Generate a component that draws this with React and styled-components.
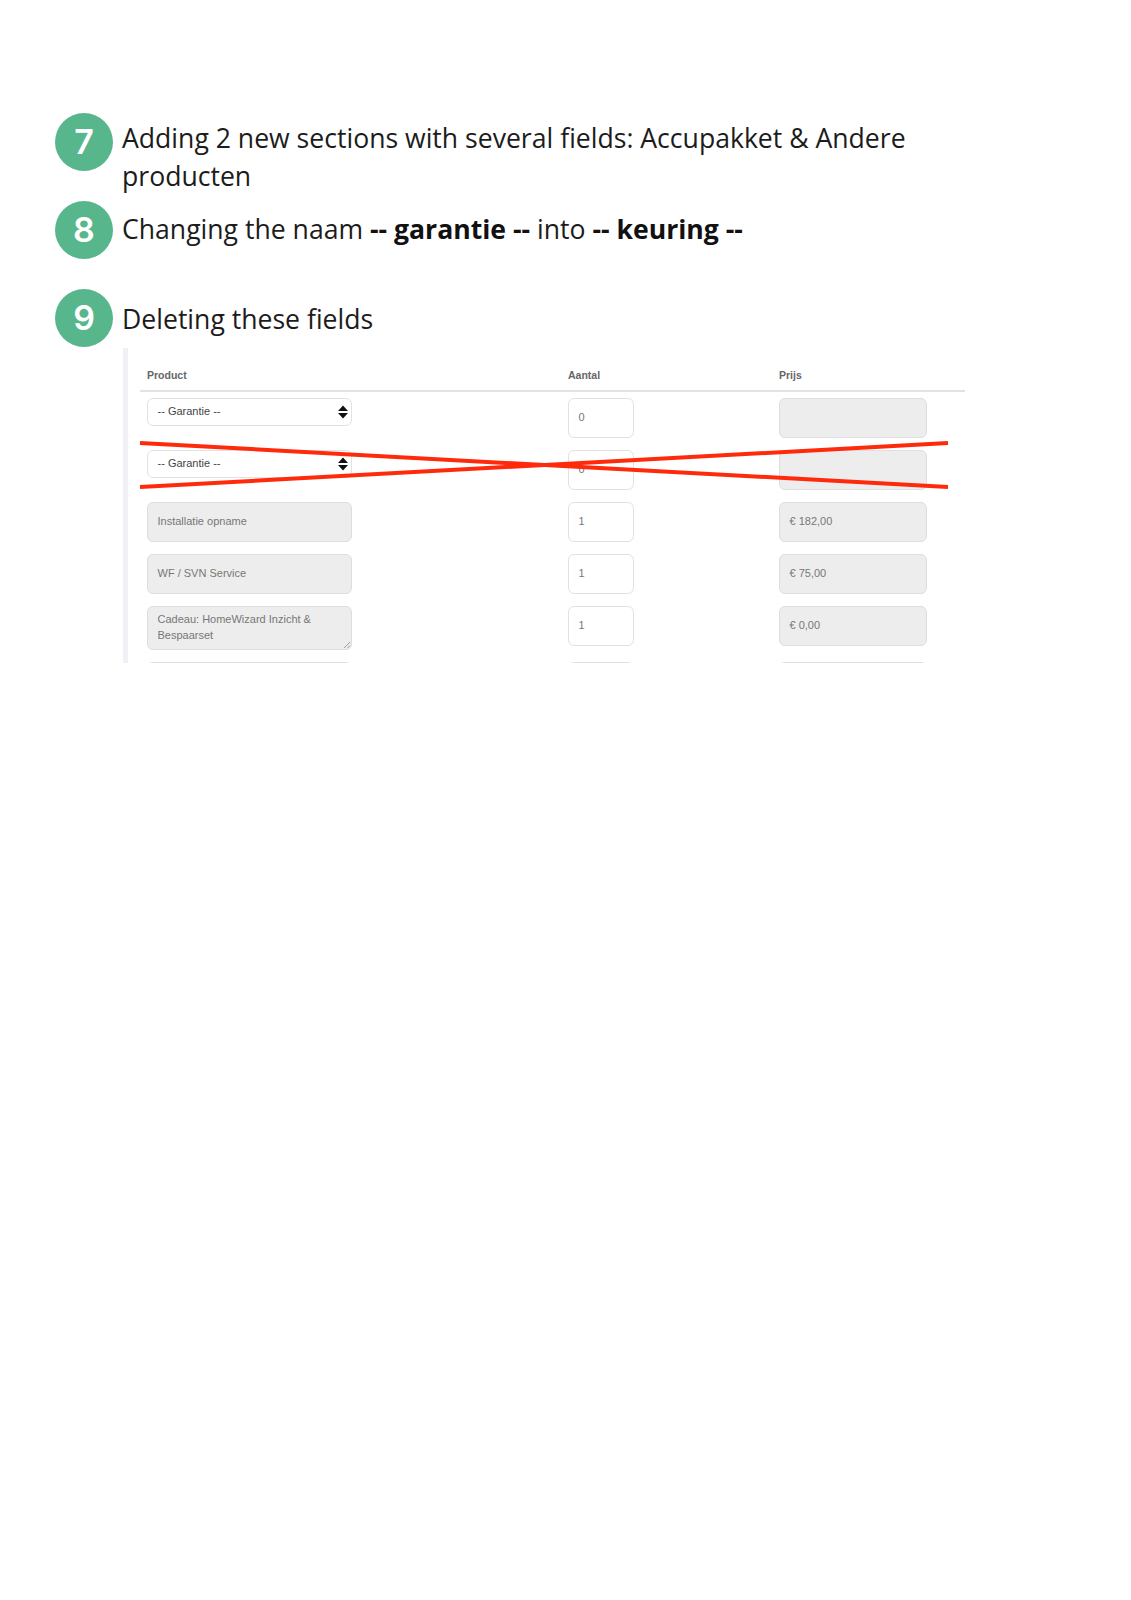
import React from 'react'
import styled, { createGlobalStyle } from 'styled-components'

const rows = [
    { type: 'select', name: '-- Garantie --', amount: '0', price: '' },
    { type: 'select', name: '-- Garantie --', amount: '0', price: '' },
    { type: 'field', name: 'Installatie opname', amount: '1', price: '€ 182,00' },
    { type: 'field', name: 'WF / SVN Service', amount: '1', price: '€ 75,00' },
    { type: 'area', name: 'Cadeau: HomeWizard Inzicht & Bespaarset', amount: '1', price: '€ 0,00' },
    { type: 'field', name: '', amount: '', price: '' },
]

export default function App() {
    return (
        <Page>
            <GlobalStyle />
            <Step $after={6}>
                <Badge>7</Badge>
                <StepText $offset={6}>Adding 2 new sections with several fields: Accupakket &amp; Andere producten</StepText>
            </Step>
            <Step $after={30}>
                <Badge>8</Badge>
                <StepText $offset={9}>
                    Changing the naam <b>-- garantie --</b> into <b>-- keuring --</b>
                </StepText>
            </Step>
            <Step $after={1}>
                <Badge>9</Badge>
                <StepText $offset={11}>Deleting these fields</StepText>
            </Step>
            <Shot>
                <HeadRow>
                    <HeadCell>Product</HeadCell>
                    <HeadCell>Aantal</HeadCell>
                    <HeadCell>Prijs</HeadCell>
                </HeadRow>
                {rows.map((row, i) => (
                    <Row key={i} $tall={row.type === 'area'}>
                        {row.type === 'select' ? (
                            <SelectBox>
                                {row.name}
                                <Arrows viewBox="0 0 10 14">
                                    <path d="M5 0.5 L10 6 H0 Z M0 8 H10 L5 13.5 Z" fill="#111" />
                                </Arrows>
                            </SelectBox>
                        ) : (
                            <NameBox $area={row.type === 'area'}>
                                {row.name}
                                {row.type === 'area' && (
                                    <Grip viewBox="0 0 8 8">
                                        <path d="M1 7 L7 1 M4.5 7 L7 4.5" stroke="#888" strokeWidth="0.8" />
                                    </Grip>
                                )}
                            </NameBox>
                        )}
                        <AmountBox>{row.amount}</AmountBox>
                        <PriceBox>{row.price}</PriceBox>
                    </Row>
                ))}
                <Cross viewBox="0 0 808 44">
                    <line x1="0" y1="0" x2="808" y2="44" stroke="#ff2a0c" strokeWidth="4" />
                    <line x1="0" y1="44" x2="808" y2="0" stroke="#ff2a0c" strokeWidth="4" />
                </Cross>
            </Shot>
        </Page>
    )
}

const GlobalStyle = createGlobalStyle`
    body {
        margin: 0;
        background: #fff;
    }
`

const Page = styled.div`
    width: 1131px;
    height: 1600px;
    box-sizing: border-box;
    padding: 113px 0 0 55px;
    font-family: "Open Sans", sans-serif;
    color: #1c1c1c;
`

const Step = styled.div`
    display: flex;
    align-items: flex-start;
    gap: 9px;
    width: 900px;
    margin-bottom: ${props => props.$after}px;
`

const Badge = styled.div`
    flex: none;
    width: 58px;
    height: 58px;
    border-radius: 50%;
    background: #58b68c;
    color: #fff;
    font-family: Inter, sans-serif;
    font-size: 34px;
    font-weight: 600;
    line-height: 58px;
    text-align: center;
`

const StepText = styled.div`
    font-size: 26.6px;
    line-height: 38px;
    padding-top: ${props => props.$offset}px;
    b {
        font-weight: 700;
        color: #111;
    }
`

const Shot = styled.div`
    position: relative;
    width: 841px;
    height: 315px;
    margin-left: 68px;
    padding-left: 12px;
    border-left: 5px solid #f0f0f7;
    overflow: hidden;
    font-family: "Liberation Sans", sans-serif;
    font-size: 11px;
    color: #777;
`

const HeadRow = styled.div`
    display: grid;
    grid-template-columns: 421px 211px 192px;
    width: 825px;
    height: 42px;
    border-bottom: 2px solid #e2e2e2;
    margin-bottom: 6px;
`

const HeadCell = styled.div`
    padding: 21px 0 0 7px;
    font-size: 10.5px;
    line-height: 13px;
    font-weight: 700;
    color: #666;
`

const Row = styled.div`
    display: grid;
    grid-template-columns: 421px 211px 192px;
    width: 824px;
    height: ${props => (props.$tall ? '56px' : '52px')};
    align-items: start;
`

const Box = styled.div`
    box-sizing: border-box;
    height: 40px;
    margin-left: 7px;
    padding: 0 9.5px;
    border: 1.5px solid #e2e2e2;
    border-radius: 6px;
    line-height: 37px;
`

const SelectBox = styled(Box)`
    position: relative;
    width: 205px;
    height: 28px;
    line-height: 25px;
    color: #444;
    background: #fff;
`

const Arrows = styled.svg`
    position: absolute;
    right: 3px;
    top: 6px;
    width: 10px;
    height: 14px;
`

const NameBox = styled(Box)`
    position: relative;
    width: 205px;
    height: ${props => (props.$area ? '44px' : '40px')};
    padding-top: ${props => (props.$area ? '4px' : '0')};
    line-height: ${props => (props.$area ? '16px' : '37px')};
    background: #ededed;
    border-color: #dedede;
`

const Grip = styled.svg`
    position: absolute;
    right: 0;
    bottom: 0;
    width: 8px;
    height: 8px;
`

const AmountBox = styled(Box)`
    width: 66px;
    background: #fff;
`

const PriceBox = styled(Box)`
    width: 148px;
    background: #ededed;
    border-color: #dedede;
`

const Cross = styled.svg`
    position: absolute;
    left: 12px;
    top: 95px;
    width: 808px;
    height: 44px;
    overflow: visible;
`
